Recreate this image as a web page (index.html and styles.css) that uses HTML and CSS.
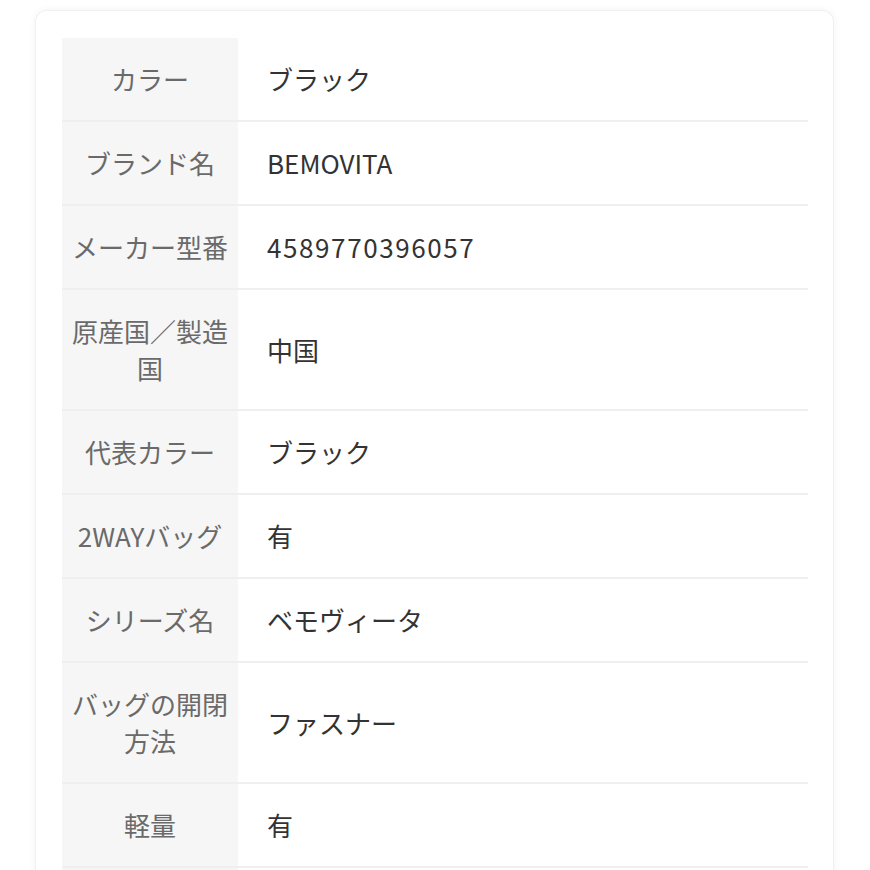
FILE: index.html
```html
<!DOCTYPE html>
<html lang="ja">
<head>
<meta charset="utf-8">
<link rel="stylesheet" href="styles.css">
</head>
<body>
<div class="card">
  <div class="spec">
    <div class="row"><div class="label">カラー</div><div class="value">ブラック</div></div>
    <div class="row"><div class="label">ブランド名</div><div class="value">BEMOVITA</div></div>
    <div class="row"><div class="label">メーカー型番</div><div class="value digits">4589770396057</div></div>
    <div class="row"><div class="label">原産国／製造国</div><div class="value">中国</div></div>
    <div class="row"><div class="label">代表カラー</div><div class="value">ブラック</div></div>
    <div class="row"><div class="label">2WAYバッグ</div><div class="value">有</div></div>
    <div class="row"><div class="label">シリーズ名</div><div class="value">ベモヴィータ</div></div>
    <div class="row"><div class="label">バッグの開閉方法</div><div class="value">ファスナー</div></div>
    <div class="row"><div class="label">軽量</div><div class="value">有</div></div>
    <div class="row"><div class="label">&nbsp;</div><div class="value">&nbsp;</div></div>
  </div>
</div>
</body>
</html>
```

FILE: styles.css
```css
html, body {
  margin: 0;
  padding: 0;
  background: #ffffff;
}
body {
  font-family: "Noto Sans CJK JP", "Noto Sans", sans-serif;
  font-size: 26px;
  line-height: 37px;
  padding: 10px 35px 0 35px;
}
.card {
  width: 799px;
  box-sizing: border-box;
  border: 1px solid #f0f0f0;
  border-bottom: none;
  border-radius: 12px 12px 0 0;
  box-shadow: 0 0 8px rgba(0, 0, 0, 0.05);
  padding: 27px 25px 0 26px;
  background: #fff;
}
.spec {
  display: flex;
  flex-direction: column;
}
.row {
  display: grid;
  grid-template-columns: 176px 1fr;
  border-bottom: 2px solid #efefef;
}
.label {
  background: #f6f6f6;
  color: #6a6a6a;
  text-align: center;
  padding: 22px 6px 23px;
  display: flex;
  align-items: center;
  justify-content: center;
}
.value {
  color: #333333;
  padding: 22px 29px 23px;
  display: flex;
  align-items: center;
}
.digits {
  letter-spacing: 1.6px;
}
```
